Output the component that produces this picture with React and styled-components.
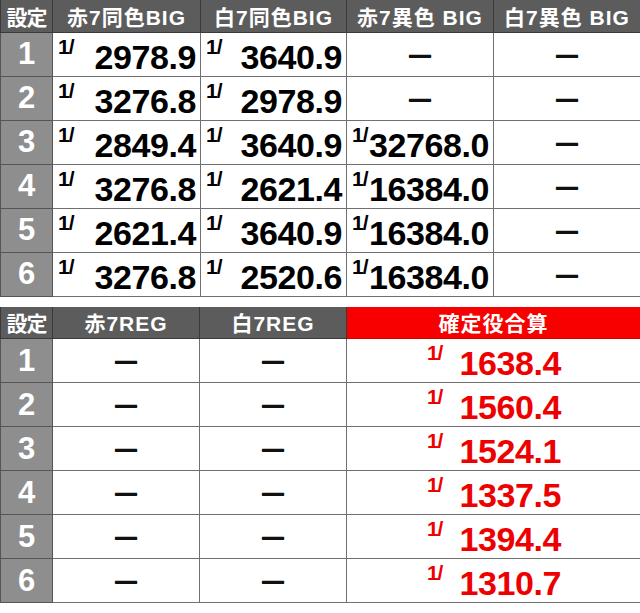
import styled, { createGlobalStyle } from "styled-components";

const GlobalStyle = createGlobalStyle`
  html, body {
    margin: 0;
    padding: 0;
    background: #fff;
  }
  body {
    font-family: "Liberation Sans", "Noto Sans CJK JP", sans-serif;
  }
`;

const Page = styled.div`
  width: 640px;
  display: flex;
  flex-direction: column;
  gap: 10px;
`;

const Table = styled.table`
  width: 640px;
  border-collapse: collapse;
  table-layout: fixed;
`;

const HeadRow = styled.tr`
  height: 32px;
`;

const Row = styled.tr`
  height: 44px;
`;

const Th = styled.th`
  background: ${(p) => (p.$red ? "#f80000" : "#5c5c5c")};
  border: 1px solid ${(p) => (p.$red ? "#d00000" : "#3a3a3a")};
  border-top: none;
  color: #fff;
  font-size: 21px;
  font-weight: 700;
  letter-spacing: ${(p) => (p.$narrow ? "-1px" : "1px")};
  text-align: center;
  padding: 0;
  white-space: nowrap;
  overflow: hidden;
`;

const Setting = styled.td`
  background: #8e8e8e;
  border: 1px solid #555;
  color: #fff;
  font-size: 31px;
  font-weight: 700;
  text-align: center;
  padding: 0;
`;

const Td = styled.td`
  border: 1px solid #707070;
  padding: 0;
  vertical-align: top;
  height: 43px;
`;

const Value = styled.div`
  display: flex;
  align-items: flex-start;
  justify-content: ${(p) => (p.$center ? "center" : "space-between")};
  gap: ${(p) => (p.$center ? "17px" : "0")};
  padding: 0 4px 0 5px;
  color: ${(p) => (p.$red ? "#ee0000" : "#000")};
  height: 43px;
  box-sizing: border-box;
`;

const Frac = styled.span`
  font-size: 21px;
  font-weight: 700;
  line-height: 1;
  margin-top: 3px;
  letter-spacing: -1px;
`;

const Num = styled.span`
  font-size: 34px;
  font-weight: 700;
  line-height: 1;
  margin-top: 7px;
  letter-spacing: -0.4px;
`;

const Dash = styled.div`
  text-align: center;
  font-size: 22px;
  font-weight: 700;
  line-height: 43px;
  color: #111;
  text-shadow: 0 1px 0 #111;
`;

const big = [
  ["2978.9", "3640.9", null],
  ["3276.8", "2978.9", null],
  ["2849.4", "3640.9", "32768.0"],
  ["3276.8", "2621.4", "16384.0"],
  ["2621.4", "3640.9", "16384.0"],
  ["3276.8", "2520.6", "16384.0"],
];

const total = ["1638.4", "1560.4", "1524.1", "1337.5", "1394.4", "1310.7"];

const Prob = ({ value, red, center }) => (
  <Value $red={red} $center={center}>
    <Frac>1/</Frac>
    <Num>{value}</Num>
  </Value>
);

const Cell = ({ value }) => (
  <Td>{value ? <Prob value={value} /> : <Dash>—</Dash>}</Td>
);

const App = () => (
  <>
    <GlobalStyle />
    <Page>
      <Table>
        <colgroup>
          <col style={{ width: 52 }} />
          <col style={{ width: 148 }} />
          <col style={{ width: 146 }} />
          <col style={{ width: 147 }} />
          <col style={{ width: 147 }} />
        </colgroup>
        <thead>
          <HeadRow>
            <Th $narrow>設定</Th>
            <Th>赤7同色BIG</Th>
            <Th>白7同色BIG</Th>
            <Th>赤7異色 BIG</Th>
            <Th>白7異色 BIG</Th>
          </HeadRow>
        </thead>
        <tbody>
          {big.map((r, i) => (
            <Row key={i}>
              <Setting>{i + 1}</Setting>
              <Cell value={r[0]} />
              <Cell value={r[1]} />
              <Cell value={r[2]} />
              <Cell value={null} />
            </Row>
          ))}
        </tbody>
      </Table>
      <Table>
        <colgroup>
          <col style={{ width: 52 }} />
          <col style={{ width: 147 }} />
          <col style={{ width: 147 }} />
          <col style={{ width: 294 }} />
        </colgroup>
        <thead>
          <HeadRow>
            <Th $narrow>設定</Th>
            <Th>赤7REG</Th>
            <Th>白7REG</Th>
            <Th $red>確定役合算</Th>
          </HeadRow>
        </thead>
        <tbody>
          {total.map((t, i) => (
            <Row key={i}>
              <Setting>{i + 1}</Setting>
              <Cell value={null} />
              <Cell value={null} />
              <Td>
                <Prob value={t} red center />
              </Td>
            </Row>
          ))}
        </tbody>
      </Table>
    </Page>
  </>
);

export default App;
